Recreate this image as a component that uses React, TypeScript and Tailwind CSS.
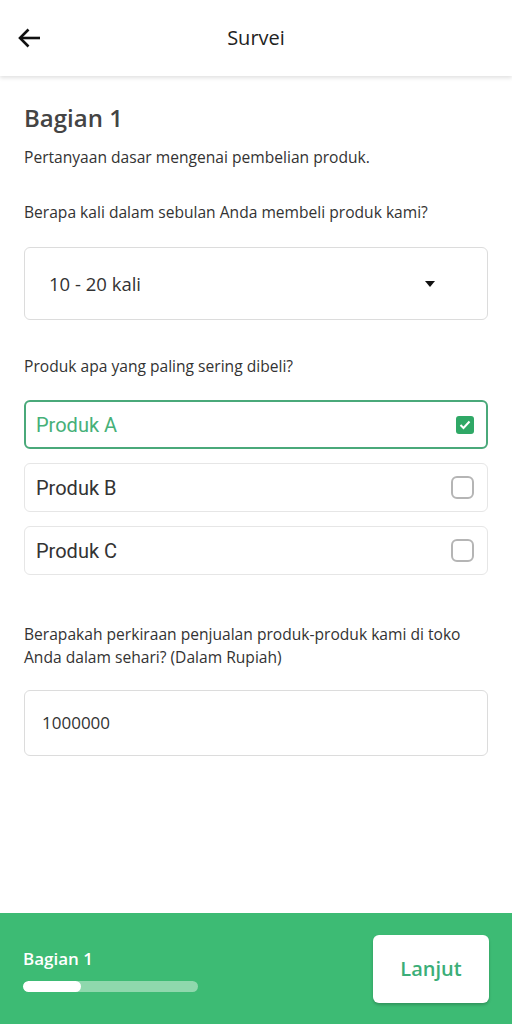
import React from "react";

export default function App() {
  const options = [
    { label: "Produk A", checked: true },
    { label: "Produk B", checked: false },
    { label: "Produk C", checked: false },
  ];
  return (
    <div
      className="w-full h-[1024px] flex flex-col bg-white text-[#333]"
      style={{ fontFamily: '"Open Sans", "Noto Sans", sans-serif' }}
    >
      <header className="h-[76px] flex items-center relative shadow-[0_2px_4px_rgba(0,0,0,0.12)] z-10 bg-white">
        <div className="absolute left-[16px] top-[26px]">
          <svg width="26" height="24" viewBox="0 0 26 24" fill="none" stroke="#111" strokeWidth="2.6" strokeLinecap="butt" strokeLinejoin="miter">
            <path d="M24 12H4" />
            <path d="M12.5 3.5L4 12l8.5 8.5" />
          </svg>
        </div>
        <div className="w-full text-center text-[20px] text-[#222]">Survei</div>
      </header>

      <main className="flex-1 px-6 flex flex-col">
        <h1 className="mt-[26px] text-[24px] leading-[32px] font-semibold text-[#444]">Bagian 1</h1>
        <p className="mt-[12px] text-[15.6px] leading-[22px]">Pertanyaan dasar mengenai pembelian produk.</p>

        <p className="mt-[33px] text-[15.6px] leading-[22px]">Berapa kali dalam sebulan Anda membeli produk kami?</p>
        <div className="mt-[24px] h-[73px] rounded-[6px] border border-[#dcdcdc] flex items-center pl-[24px] pr-[52px]">
          <span className="flex-1 text-[18.5px] text-[#333]">10 - 20 kali</span>
          <svg width="10" height="6" viewBox="0 0 10 6">
            <path d="M0 0h10L5 6z" fill="#111" />
          </svg>
        </div>

        <p className="mt-[35px] text-[15.6px] leading-[22px]">Produk apa yang paling sering dibeli?</p>
        <div className="mt-[23px] flex flex-col gap-[14px]">
          {options.map((o) => (
            <div
              key={o.label}
              className={
                o.checked
                  ? "h-[49px] rounded-[6px] border-2 border-[#4aa97a] flex items-center pl-[10px] pr-[12px]"
                  : "h-[49px] rounded-[6px] border border-[#e6e6e6] flex items-center pl-[11px] pr-[13px]"
              }
            >
              <span
                className={o.checked ? "flex-1 text-[20px] text-[#46b078]" : "flex-1 text-[20px] text-[#333]"}
                style={{ fontFamily: 'Roboto, "Noto Sans", sans-serif' }}
              >
                {o.label}
              </span>
              {o.checked ? (
                <div className="w-[18px] h-[18px] rounded-[3px] bg-[#2fa866] flex items-center justify-center">
                  <svg width="12" height="10" viewBox="0 0 12 10" fill="none" stroke="#fff" strokeWidth="2">
                    <path d="M1.5 5l3 3 6-6.5" />
                  </svg>
                </div>
              ) : (
                <div className="w-[23px] h-[23px] rounded-[6px] border-2 border-[#b5b5b5]" />
              )}
            </div>
          ))}
        </div>

        <p className="mt-[48px] text-[15.6px] leading-[23px]">
          Berapakah perkiraan penjualan produk-produk kami di toko Anda dalam sehari? (Dalam Rupiah)
        </p>
        <div className="mt-[21px] h-[66px] rounded-[6px] border border-[#dcdcdc] flex items-center pl-[17px]">
          <span className="text-[17px] text-[#333]">1000000</span>
        </div>
      </main>

      <footer className="h-[111px] bg-[#3dbb74] flex items-center justify-between pl-[23px] pr-[23px]">
        <div className="flex flex-col">
          <span className="text-[17px] font-semibold text-white leading-[22px] mt-[2px]">Bagian 1</span>
          <div className="mt-[11px] w-[175px] h-[11px] rounded-full bg-[#8fd8ad] overflow-hidden">
            <div className="h-full w-[58px] rounded-full bg-white" />
          </div>
        </div>
        <button className="w-[116px] h-[68px] rounded-[6px] bg-white shadow-[0_2px_3px_rgba(0,0,0,0.2)] text-[20px] font-semibold text-[#3bae78]">
          Lanjut
        </button>
      </footer>
    </div>
  );
}
